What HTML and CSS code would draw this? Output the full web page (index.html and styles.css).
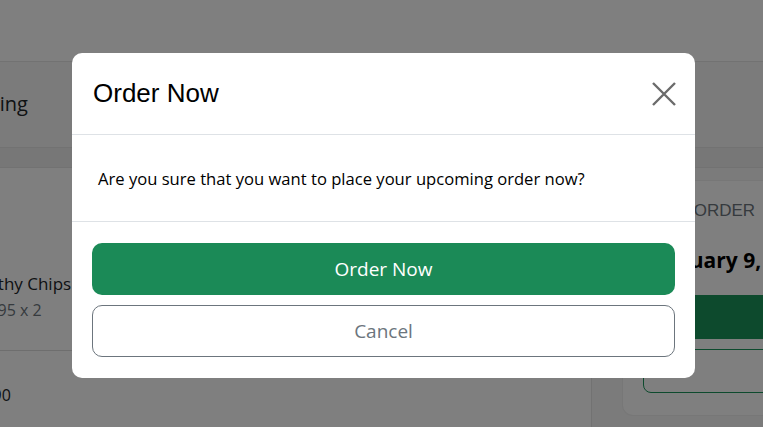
FILE: index.html
```html
<!DOCTYPE html>
<html>
<head>
<meta charset="utf-8">
<link rel="stylesheet" href="styles.css">
</head>
<body>
<div class="page">
  <div class="page-head"><span class="page-title">Shipping</span></div>
  <div class="page-band"></div>
  <div class="columns">
    <div class="left-panel">
      <div class="item-row">
        <div class="item-name">Healthy Chips</div>
        <div class="item-price">$3.95 x 2</div>
      </div>
      <div class="total-row">$7.90</div>
    </div>
    <div class="right-col">
      <div class="summary-card">
        <div class="summary-label">NEXT ORDER</div>
        <div class="summary-date">February 9, 2024</div>
        <div class="summary-btn"></div>
        <div class="summary-btn-outline"></div>
      </div>
    </div>
  </div>
</div>
<div class="overlay">
  <div class="modal">
    <div class="modal-header">
      <h2 class="modal-title">Order Now</h2>
      <button class="close-btn" aria-label="Close">
        <svg width="24" height="24" viewBox="0 0 24 24"><path d="M1 1 L23 23 M23 1 L1 23" stroke="#6b6b6b" stroke-width="2.4" fill="none"/></svg>
      </button>
    </div>
    <div class="modal-body">Are you sure that you want to place your upcoming order now?</div>
    <div class="modal-footer">
      <button class="btn btn-primary">Order Now</button>
      <button class="btn btn-outline">Cancel</button>
    </div>
  </div>
</div>
</body>
</html>
```
FILE: styles.css
```css
* { box-sizing: border-box; }
html, body { margin: 0; padding: 0; }
body {
  width: 763px;
  height: 427px;
  overflow: hidden;
  background: #fff;
  font-family: "Open Sans", "Noto Sans", sans-serif;
  color: #212529;
  position: relative;
}
.page {
  padding-top: 61px;
  display: flex;
  flex-direction: column;
}
.page-head {
  height: 86px;
  background: #f6f6f6;
  border-top: 1px solid #e4e4e4;
  display: flex;
  align-items: center;
  padding-bottom: 2px;
}
.page-title {
  font-size: 20px;
  color: #212529;
  margin-left: -53px;
}
.page-band {
  height: 21px;
  background: #efefef;
  border-top: 1px solid #e4e4e4;
  border-bottom: 1px solid #e4e4e4;
}
.columns {
  display: flex;
  height: 260px;
}
.left-panel {
  width: 592px;
  flex-shrink: 0;
  background: #fff;
  border-right: 1px solid #e4e4e4;
}
.item-row {
  height: 183px;
  padding-top: 104px;
  border-bottom: 1px solid #dddddd;
}
.item-name {
  font-size: 17px;
  line-height: 24px;
  color: #212529;
  margin-left: -38px;
}
.item-price {
  font-size: 16px;
  line-height: 24px;
  color: #6c757d;
  margin-top: 2px;
  margin-left: -25px;
}
.total-row {
  padding-top: 32px;
  font-size: 16px;
  line-height: 24px;
  margin-left: -30px;
}
.right-col {
  flex: 1;
  background: #f6f6f6;
  padding: 13px 0 0 31px;
}
.summary-card {
  width: 200px;
  height: 234px;
  background: #fff;
  border-radius: 10px;
  box-shadow: 0 0 0 1px #eeeeee;
  padding: 20px 0 0 20px;
}
.summary-label {
  font-family: "Liberation Sans", Arial, sans-serif;
  font-size: 17px;
  line-height: 20px;
  color: #6c757d;
  white-space: nowrap;
  margin-left: 1px;
}
.summary-date {
  font-size: 21px;
  line-height: 30px;
  font-weight: 700;
  color: #000;
  margin-top: 24px;
  white-space: nowrap;
}
.summary-btn {
  height: 44px;
  background: #1a945a;
  margin-top: 20px;
}
.summary-btn-outline {
  height: 44px;
  border: 1px solid #1a945a;
  border-radius: 8px;
  margin-top: 10px;
}
.overlay {
  position: absolute;
  inset: 0;
  background: rgba(0,0,0,0.5);
}
.modal {
  position: absolute;
  left: 72px;
  top: 53px;
  width: 623px;
  height: 325px;
  background: #fff;
  border-radius: 10px;
  display: flex;
  flex-direction: column;
}
.modal-header {
  height: 82px;
  border-bottom: 1px solid #dee2e6;
  display: flex;
  align-items: center;
  justify-content: space-between;
  padding: 0 19px 0 21px;
}
.modal-title {
  margin: 0;
  font-family: "Liberation Sans", Arial, sans-serif;
  font-weight: 400;
  font-size: 26px;
  color: #000;
}
.close-btn {
  border: 0;
  background: none;
  padding: 0;
  width: 24px;
  height: 24px;
  display: flex;
}
.modal-body {
  height: 87px;
  border-bottom: 1px solid #dee2e6;
  padding: 0 0 0 26px;
  display: flex;
  align-items: center;
  font-size: 16.6px;
  color: #000;
}
.modal-footer {
  flex: 1;
  padding: 21px 20px 20px;
  display: flex;
  flex-direction: column;
  gap: 10px;
}
.btn {
  height: 52px;
  border-radius: 10px;
  font-family: "Open Sans", "Noto Sans", sans-serif;
  font-size: 19px;
}
.btn-primary {
  background: #1b8a57;
  color: #fff;
  border: 0;
}
.btn-outline {
  background: #fff;
  color: #6c757d;
  border: 1px solid #6c757d;
}
```
